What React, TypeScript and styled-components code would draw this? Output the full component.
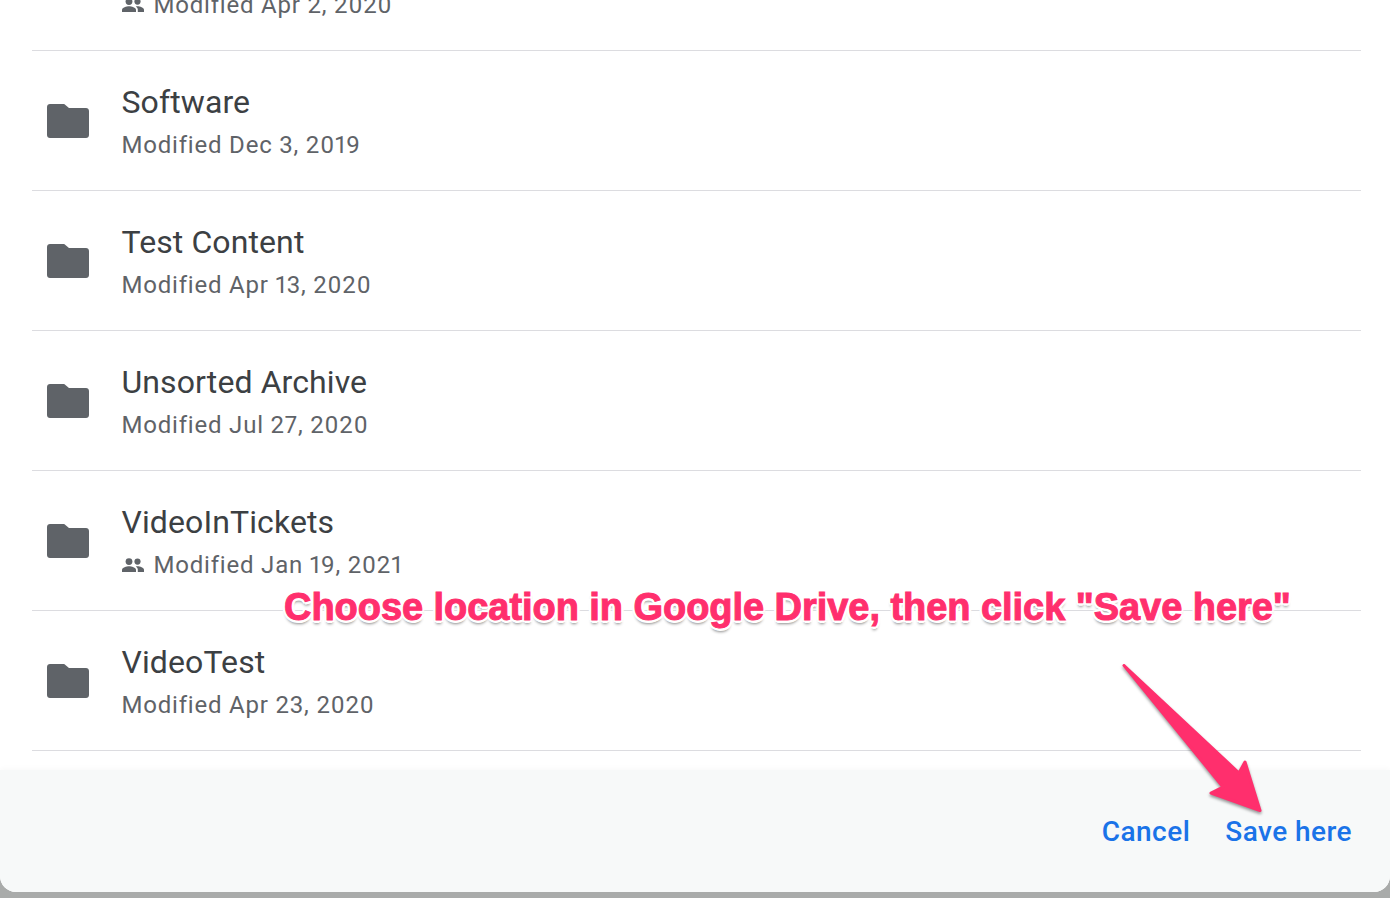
import React from "react";
import styled, { createGlobalStyle } from "styled-components";

const Global = createGlobalStyle`
  html, body { margin: 0; padding: 0; background: #a9abaa; }
  body { font-family: Roboto, "Liberation Sans", sans-serif; }
`;

const Screen = styled.div`
  position: relative;
  width: 1390px;
  height: 898px;
  overflow: hidden;
  background: #a9abaa;
`;

const Dialog = styled.div`
  display: flex;
  flex-direction: column;
  height: 892px;
  background: #fff;
  border-radius: 0 0 16px 16px;
  overflow: hidden;
`;

const List = styled.ul`
  flex: 1;
  list-style: none;
  margin: -89px 0 0;
  padding: 0 29px 0 32px;
`;

const Row = styled.li`
  display: flex;
  align-items: center;
  height: 140px;
  box-sizing: border-box;
  border-bottom: 1px solid #dcdce0;
  padding-top: 3px;
`;

const FolderSlot = styled.div`
  flex: 0 0 89.5px;
  display: flex;
  padding: 0 0 3px 15px;
  box-sizing: border-box;
  color: #5f6368;
`;

const Info = styled.div`
  display: flex;
  flex-direction: column;
`;

const Name = styled.div`
  font-size: 32px;
  line-height: 40px;
  letter-spacing: 0.1px;
  color: #3c4043;
  margin-bottom: 5px;
`;

const Meta = styled.div`
  display: flex;
  align-items: center;
  gap: 10px;
  font-size: 24px;
  line-height: 36px;
  letter-spacing: 0.8px;
  font-variant-numeric: proportional-nums;
  color: #5f6368;
`;

const Footer = styled.div`
  flex: 0 0 122px;
  display: flex;
  justify-content: flex-end;
  align-items: center;
  gap: 35px;
  padding: 0 38px 0 0;
  box-sizing: border-box;
  background: #f7f9f9;
  box-shadow: 0 -1px 6px rgba(0, 0, 0, 0.03);
`;

const Action = styled.button`
  appearance: none;
  border: none;
  background: none;
  padding: 0;
  font-family: Roboto, "Liberation Sans", sans-serif;
  font-size: 28px;
  font-weight: 500;
  letter-spacing: 0.45px;
  color: #1a73e8;
`;

const Annotation = styled.div`
  position: absolute;
  left: 284px;
  top: 583px;
  font-family: "Liberation Sans", Arial, sans-serif;
  font-size: 38px;
  line-height: 48px;
  font-weight: 700;
  letter-spacing: -0.05px;
  white-space: nowrap;
  color: #ff2f6d;
  -webkit-text-stroke: 1px #ff2f6d;
  text-shadow:
    3px 0 0 #fff, -3px 0 0 #fff, 0 3px 0 #fff, 0 -3px 0 #fff,
    2px 2px 0 #fff, -2px 2px 0 #fff, 2px -2px 0 #fff, -2px -2px 0 #fff,
    0 4px 3px rgba(0, 0, 0, 0.45);
`;

const ArrowSvg = styled.svg`
  position: absolute;
  left: 1110px;
  top: 655px;
  overflow: visible;
  filter: drop-shadow(0 2px 1.5px rgba(0, 0, 0, 0.4));
`;

const FolderIcon = () => (
  <svg width="42" height="34" viewBox="0 0 42 34" fill="currentColor" aria-hidden>
    <path d="M3 0h13c1.200 0 2 .5 2.700 1.200L22 4h17c1.700 0 3 1.300 3 3v24c0 1.700-1.300 3-3 3H3c-1.700 0-3-1.300-3-3V3c0-1.700 1.300-3 3-3z" />
  </svg>
);

const SharedIcon = () => (
  <svg width="22" height="14" viewBox="0 0 22 14" fill="currentColor" aria-hidden>
    <circle cx="7" cy="3.600" r="3.400" />
    <circle cx="15.500" cy="3.600" r="3.100" />
    <path d="M0 14v-2.200C0 9.400 4.500 8.200 7 8.200s7 1.200 7 3.600V14H0z" />
    <path d="M15.800 14v-2.400c0-1.300-.7-2.400-2-3.200.6-.1 1.200-.2 1.700-.2 2.400 0 6.500 1.200 6.500 3.500V14h-6.200z" />
  </svg>
);

const rows = [
  { name: "Shared", date: "Modified Apr 2, 2020", shared: true },
  { name: "Software", date: "Modified Dec 3, 2019" },
  { name: "Test Content", date: "Modified Apr 13, 2020" },
  { name: "Unsorted Archive", date: "Modified Jul 27, 2020" },
  { name: "VideoInTickets", date: "Modified Jan 19, 2021", shared: true },
  { name: "VideoTest", date: "Modified Apr 23, 2020" },
];

export default function App() {
  return (
    <Screen>
      <Global />
      <Dialog>
        <List>
          {rows.map((r) => (
            <Row key={r.date}>
              <FolderSlot>
                <FolderIcon />
              </FolderSlot>
              <Info>
                <Name>{r.name}</Name>
                <Meta>
                  {r.shared && <SharedIcon />}
                  {r.date}
                </Meta>
              </Info>
            </Row>
          ))}
        </List>
        <Footer>
          <Action>Cancel</Action>
          <Action>Save here</Action>
        </Footer>
      </Dialog>
      <Annotation>Choose location in Google Drive, then click "Save here"</Annotation>
      <ArrowSvg width="160" height="165" viewBox="0 0 160 165" aria-hidden>
        <path
          d="M14 10.500 L129 118 L135 107 L150 155.500 L101 138 L113 132 L14.500 11 Z"
          fill="#ff2f6d"
          stroke="#ff2f6d"
          strokeWidth="3"
          strokeLinejoin="round"
        />
      </ArrowSvg>
    </Screen>
  );
}
